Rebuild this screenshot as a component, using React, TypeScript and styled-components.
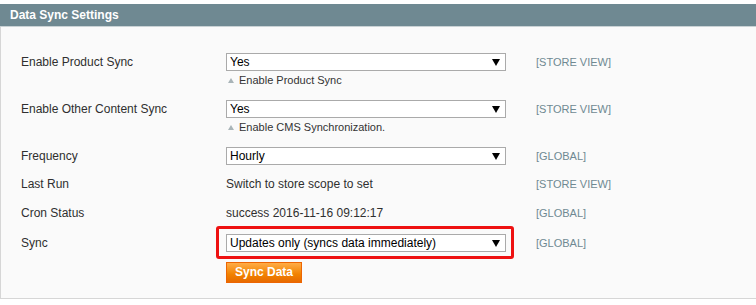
import React from 'react';
import styled, { createGlobalStyle } from 'styled-components';

const GlobalStyle = createGlobalStyle`
	html, body {
		margin: 0;
		padding: 0;
		background: #fff;
	}
	body {
		font-family: "Liberation Sans", Arial, sans-serif;
		font-size: 12px;
		color: #2f2f2f;
	}
`;

const Page = styled.div`
	padding-top: 4px;
	width: 756px;
`;

const Header = styled.div`
	height: 22px;
	background: #6f8992;
	border-bottom: 1px solid #c9d2d5;
	display: flex;
	align-items: center;
	padding-left: 10px;
`;

const HeaderTitle = styled.h4`
	margin: 0;
	font-size: 12px;
	font-weight: bold;
	color: #fff;
	line-height: 22px;
`;

const Fieldset = styled.div`
	background: #fafafa;
	border-left: 1px solid #d6d6d6;
	border-bottom: 1px solid #d6d6d6;
	padding: 21px 0 16px 20px;
	height: 234px;
`;

const Row = styled.div<{ $extraTop?: number }>`
	display: grid;
	grid-template-columns: 205px 280px auto;
	padding: ${({ $extraTop }) => 5 + ($extraTop || 0)}px 0 5px;
	align-items: start;
`;

const Label = styled.div`
	line-height: 18px;
	font-size: 12px;
	color: #2f2f2f;
`;

const Value = styled.div`
	display: flex;
	flex-direction: column;
	align-items: flex-start;
`;

const Text = styled.div`
	line-height: 18px;
`;

const SelectWrap = styled.div<{ $highlight?: boolean }>`
	position: relative;
	width: 280px;
	height: 18px;
	&::before {
		content: '';
		display: ${({ $highlight }) => ($highlight ? 'block' : 'none')};
		position: absolute;
		top: -8px;
		left: -10px;
		right: -8px;
		bottom: -7px;
		border: 3px solid #ee1111;
		border-radius: 3px;
		pointer-events: none;
	}
`;

const Select = styled.select`
	appearance: none;
	-webkit-appearance: none;
	box-sizing: border-box;
	width: 100%;
	height: 18px;
	border: 1px solid #aaa;
	border-radius: 0;
	background: #fff;
	font-family: "Liberation Sans", Arial, sans-serif;
	font-size: 12px;
	color: #000;
	padding: 0 3px;
	margin: 0;
	line-height: 16px;
	outline: none;
`;

const Arrow = styled.span`
	position: absolute;
	right: 6px;
	top: 6px;
	width: 0;
	height: 0;
	border-left: 4px solid transparent;
	border-right: 4px solid transparent;
	border-top: 7px solid #000;
	pointer-events: none;
`;

const Hint = styled.div`
	display: flex;
	align-items: center;
	gap: 5px;
	margin-top: 2px;
	padding-left: 2px;
	line-height: 14px;
	padding-bottom: 3px;
	font-size: 11px;
	color: #333;
`;

const HintArrow = styled.span`
	width: 0;
	height: 0;
	border-left: 3px solid transparent;
	border-right: 3px solid transparent;
	border-bottom: 5px solid #a9b4b8;
`;

const Scope = styled.div`
	margin-left: 30px;
	line-height: 18px;
	font-size: 11px;
	color: #6f8992;
`;

const Button = styled.button`
	margin-top: 10px;
	height: 21px;
	padding: 0 8px;
	border: 1px solid #ed6502;
	background: linear-gradient(#ffac47, #f18200 60%, #e76a00);
	color: #fff;
	font-family: "Liberation Sans", Arial, sans-serif;
	font-size: 12px;
	font-weight: bold;
	line-height: 19px;
	cursor: pointer;
`;

type Field = {
	label: string;
	scope: string;
	select?: string;
	text?: string;
	hint?: string;
	highlight?: boolean;
	extraTop?: number;
	button?: string;
};

const fields: Field[] = [
	{ label: 'Enable Product Sync', select: 'Yes', hint: 'Enable Product Sync', scope: '[STORE VIEW]' },
	{ label: 'Enable Other Content Sync', select: 'Yes', hint: 'Enable CMS Synchronization.', scope: '[STORE VIEW]' },
	{ label: 'Frequency', select: 'Hourly', scope: '[GLOBAL]' },
	{ label: 'Last Run', text: 'Switch to store scope to set', scope: '[STORE VIEW]' },
	{ label: 'Cron Status', text: 'success 2016-11-16 09:12:17', scope: '[GLOBAL]', extraTop: 1 },
	{
		label: 'Sync',
		select: 'Updates only (syncs data immediately)',
		scope: '[GLOBAL]',
		highlight: true,
		extraTop: 2,
		button: 'Sync Data',
	},
];

export default function App() {
	return (
		<Page>
			<GlobalStyle />
			<Header>
				<HeaderTitle>Data Sync Settings</HeaderTitle>
			</Header>
			<Fieldset>
				{fields.map((f) => (
					<Row key={f.label} $extraTop={f.extraTop}>
						<Label>{f.label}</Label>
						<Value>
							{f.select ? (
								<SelectWrap $highlight={f.highlight}>
									<Select defaultValue={f.select}>
										<option value={f.select}>{f.select}</option>
									</Select>
									<Arrow />
								</SelectWrap>
							) : (
								<Text>{f.text}</Text>
							)}
							{f.hint && (
								<Hint>
									<HintArrow />
									{f.hint}
								</Hint>
							)}
							{f.button && <Button type="button">{f.button}</Button>}
						</Value>
						<Scope>{f.scope}</Scope>
					</Row>
				))}
			</Fieldset>
		</Page>
	);
}
